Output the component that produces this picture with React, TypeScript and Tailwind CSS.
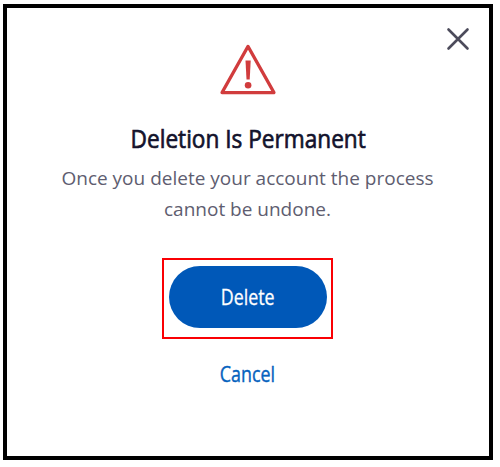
export default function App() {
  return (
    <div className="h-[467px] w-[500px] bg-white pl-[3px] pt-1 font-['Open_Sans','Noto_Sans',sans-serif]">
      <main className="flex h-[456px] w-[490px] flex-col border-4 border-black bg-white">
        <header className="grid h-[87px] grid-cols-[1fr_58px_1fr] items-start">
          <span />
          <svg className="mt-[35px] h-[54px] w-[58px]" viewBox="0 0 58 54" fill="none" aria-hidden="true">
            <path d="M29 3.4 55 49.6H3Z" stroke="#d13c3d" strokeWidth="3.2" strokeLinejoin="round" />
            <path d="M26.5 17.4h5.2l-1 19h-3.2Z" fill="#d13c3d" />
            <circle cx="29.1" cy="42.3" r="3.3" fill="#d13c3d" />
          </svg>
          <button aria-label="Close" className="mr-[19px] mt-[19px] justify-self-end">
            <svg className="h-6 w-6" viewBox="0 0 24 24" fill="none" stroke="#4c4b5b" strokeWidth="2.6" strokeLinecap="round">
              <path d="m2.5 2.5 19 19M21.5 2.5l-19 19" />
            </svg>
          </button>
        </header>
        <div className="flex flex-col items-center">
          <h1 className="mt-[25px] h-[36px] origin-center scale-x-[0.87] whitespace-nowrap text-[26px] leading-[36px] text-[#13132c] [-webkit-text-stroke:0.7px_#13132c]">
            Deletion Is Permanent
          </h1>
          <div className="mt-[7px] flex flex-col items-center whitespace-nowrap pr-px text-[19px] leading-[31px] text-[#5e5d70]">
            <span>Once you delete your account the process</span>
            <span>cannot be undone.</span>
          </div>
          <div className="mr-px mt-[33px] flex h-[81px] w-[171px] items-start justify-center border-2 border-[#fa0004] pt-[6px]">
            <button className="flex h-[62px] w-[158px] items-center justify-center rounded-full bg-[#0058b8] text-white">
              <span className="scale-x-[0.85] text-[21px] leading-[28px] [-webkit-text-stroke:0.3px_white]">Delete</span>
            </button>
          </div>
          <button className="mr-px mt-[21px] h-[28px] text-[#0562be]">
            <span className="block scale-x-[0.85] text-[21px] leading-[28px] [-webkit-text-stroke:0.4px_#0562be]">Cancel</span>
          </button>
        </div>
      </main>
    </div>
  );
}
